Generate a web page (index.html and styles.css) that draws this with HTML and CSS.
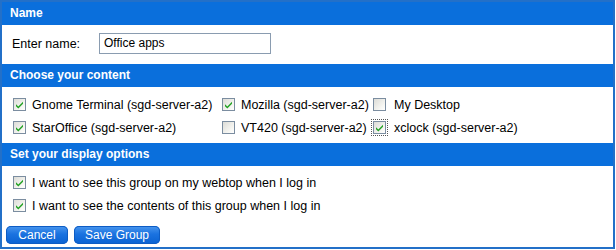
FILE: index.html
```html
<!DOCTYPE html>
<html>
<head>
<meta charset="utf-8">
<link rel="stylesheet" href="styles.css">
</head>
<body>
<div class="panel">
  <div class="hdr">Name</div>
  <div class="name-sec">
    <span class="lbl">Enter name:</span>
    <span class="input">Office apps</span>
  </div>
  <div class="hdr">Choose your content</div>
  <div class="content-sec">
    <label class="cb"><span class="box on"><svg viewBox="0 0 13 13"><path d="M3 6.2 L5.3 8.6 L10 3.8 L10 5.8 L5.3 10.6 L3 8.2 Z"/></svg></span>Gnome Terminal (sgd-server-a2)</label>
    <label class="cb"><span class="box on"><svg viewBox="0 0 13 13"><path d="M3 6.2 L5.3 8.6 L10 3.8 L10 5.8 L5.3 10.6 L3 8.2 Z"/></svg></span>Mozilla (sgd-server-a2)</label>
    <label class="cb"><span class="box"></span>My Desktop</label>
    <label class="cb"><span class="box on"><svg viewBox="0 0 13 13"><path d="M3 6.2 L5.3 8.6 L10 3.8 L10 5.8 L5.3 10.6 L3 8.2 Z"/></svg></span>StarOffice (sgd-server-a2)</label>
    <label class="cb"><span class="box"></span>VT420 (sgd-server-a2)</label>
    <label class="cb"><span class="box on focus"><svg viewBox="0 0 13 13"><path d="M3 6.2 L5.3 8.6 L10 3.8 L10 5.8 L5.3 10.6 L3 8.2 Z"/></svg></span>xclock (sgd-server-a2)</label>
  </div>
  <div class="hdr">Set your display options</div>
  <div class="opt-sec">
    <label class="cb"><span class="box on"><svg viewBox="0 0 13 13"><path d="M3 6.2 L5.3 8.6 L10 3.8 L10 5.8 L5.3 10.6 L3 8.2 Z"/></svg></span>I want to see this group on my webtop when I log in</label>
    <label class="cb"><span class="box on"><svg viewBox="0 0 13 13"><path d="M3 6.2 L5.3 8.6 L10 3.8 L10 5.8 L5.3 10.6 L3 8.2 Z"/></svg></span>I want to see the contents of this group when I log in</label>
    <div class="btns">
      <span class="btn cancel">Cancel</span>
      <span class="btn save">Save Group</span>
    </div>
  </div>
</div>
</body>
</html>
```
FILE: styles.css
```css
html, body {
  margin: 0;
  padding: 0;
  background: #ffffff;
}
body {
  font-family: "Liberation Sans", Arial, sans-serif;
  font-size: 12px;
  color: #000;
}
.panel {
  width: 611px;
  height: 245px;
  border: 2px solid #2370c8;
  display: flex;
  flex-direction: column;
}
.hdr {
  height: 23px;
  background: #0a6fdc;
  color: #fff;
  font-weight: bold;
  font-size: 12px;
  line-height: 23px;
  padding-left: 8px;
}
.name-sec {
  height: 39px;
  display: flex;
  align-items: center;
  padding-left: 10px;
  box-sizing: border-box;
  padding-bottom: 2px;
}
.lbl {
  width: 87px;
  font-size: 12.5px;
}
.input {
  width: 166px;
  height: 19px;
  border: 1px solid #8a9cb0;
  font-size: 12px;
  line-height: 19px;
  padding-left: 4px;
}
.content-sec {
  height: 56px;
  box-sizing: border-box;
  padding: 6px 0 4px 11px;
  display: grid;
  grid-template-columns: 209px 151px 1fr;
  grid-auto-rows: 23px;
}
.cb {
  display: flex;
  align-items: center;
  font-size: 12.5px;
  white-space: nowrap;
}
.box {
  width: 11px;
  height: 11px;
  border: 1px solid #7b8da0;
  background: linear-gradient(135deg, #dcdcd7 0%, #f6f6f2 70%, #ffffff 100%);
  margin-right: 6px;
  flex: none;
  position: relative;
}
.box svg {
  position: absolute;
  left: -1px;
  top: -1px;
  width: 13px;
  height: 13px;
}
.box svg path {
  fill: #21a121;
}
.box.focus {
  outline: 1px dotted #555;
  outline-offset: 1px;
}
.content-sec .cb:nth-child(3) .box,
.content-sec .cb:nth-child(6) .box {
  margin-right: 8px;
}
.opt-sec {
  flex: 1;
  padding: 5px 0 0 11px;
  display: flex;
  flex-direction: column;
}
.opt-sec .cb {
  height: 23px;
}
.btns {
  display: flex;
  gap: 6px;
  margin-top: 9px;
  margin-left: -7px;
}
.btn {
  height: 18px;
  line-height: 18px;
  border-radius: 5px;
  background: linear-gradient(#4a97ee 0%, #1a72e0 45%, #0a62d2 100%);
  color: #fff;
  font-size: 12px;
  text-align: center;
  box-shadow: inset 0 0 0 1px #0d5cc4;
}
.cancel { width: 62px; }
.save { width: 86px; }
```
